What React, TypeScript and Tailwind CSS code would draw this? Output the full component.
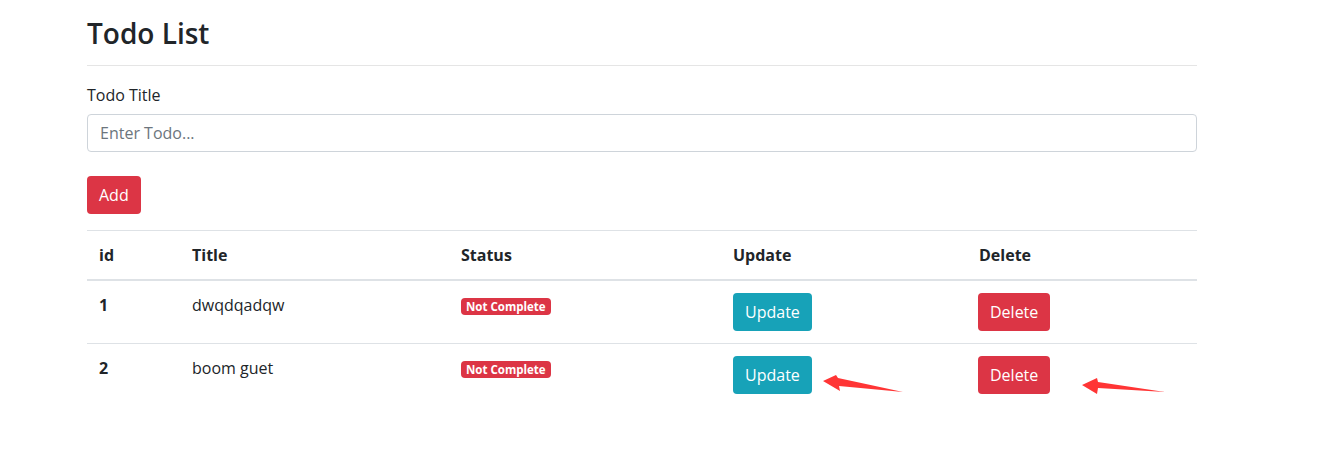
import React from "react";

const rows = [
  { id: 1, title: "dwqdqadqw" },
  { id: 2, title: "boom guet" },
];

export default function App() {
  return (
    <div
      className="relative w-[1328px] h-[475px] bg-white text-[#212529] overflow-hidden"
      style={{ fontFamily: '"Open Sans", "Noto Sans", sans-serif' }}
    >
      <div className="ml-[87px] w-[1110px] flex flex-col">
        <h2 className="mt-[14px] text-[28px] leading-[38px] font-semibold">Todo List</h2>
        <hr className="mt-[13px] border-0 border-t border-[#e5e5e5]" />
        <label className="mt-[17px] text-[16px] leading-[24px]">Todo Title</label>
        <input
          className="mt-[7px] h-[38px] w-full rounded-[4px] border border-[#ced4da] px-[12px] text-[16px] placeholder:text-[#6c757d] outline-none"
          placeholder="Enter Todo..."
        />
        <div className="mt-[24px]">
          <button className="h-[38px] rounded-[4px] bg-[#dc3545] px-[12px] text-[16px] text-white">Add</button>
        </div>
        <table className="mt-[16px] w-[1110px] border-collapse text-[16px] leading-[24px]">
          <thead>
            <tr>
              <th className="w-[93px] border-t border-b-2 border-[#dee2e6] p-[12px] text-left font-bold align-bottom">id</th>
              <th className="w-[269px] border-t border-b-2 border-[#dee2e6] p-[12px] text-left font-bold align-bottom">Title</th>
              <th className="w-[272px] border-t border-b-2 border-[#dee2e6] p-[12px] text-left font-bold align-bottom">Status</th>
              <th className="w-[246px] border-t border-b-2 border-[#dee2e6] p-[12px] text-left font-bold align-bottom">Update</th>
              <th className="w-[230px] border-t border-b-2 border-[#dee2e6] p-[12px] text-left font-bold align-bottom">Delete</th>
            </tr>
          </thead>
          <tbody>
            {rows.map((r) => (
              <tr key={r.id}>
                <td className="border-t border-[#dee2e6] p-[12px] align-top font-bold">{r.id}</td>
                <td className="border-t border-[#dee2e6] p-[12px] align-top">{r.title}</td>
                <td className="border-t border-[#dee2e6] p-[12px] align-top">
                  <span className="mt-[5px] block w-fit rounded-[4px] bg-[#dc3545] px-[5px] py-[2px] text-[11.5px] leading-[13px] font-bold text-white">
                    Not Complete
                  </span>
                </td>
                <td className="border-t border-[#dee2e6] p-[12px] align-top">
                  <button className="h-[38px] rounded-[4px] bg-[#17a2b8] px-[12px] text-[16px] text-white">Update</button>
                </td>
                <td className="border-t border-[#dee2e6] pl-[11px] pr-[12px] py-[12px] align-top">
                  <button className="h-[38px] rounded-[4px] bg-[#dc3545] px-[12px] text-[16px] text-white">Delete</button>
                </td>
              </tr>
            ))}
          </tbody>
        </table>
      </div>
      <svg className="absolute left-0 top-0 pointer-events-none" width="1328" height="475">
        <polygon points="823,381 836,375 838,378 903,392 839,386 840,391" fill="#ff3535" />
        <polygon points="1082,385 1097,378 1098,382 1165,392 1098,388 1097,394" fill="#ff3535" />
      </svg>
    </div>
  );
}
